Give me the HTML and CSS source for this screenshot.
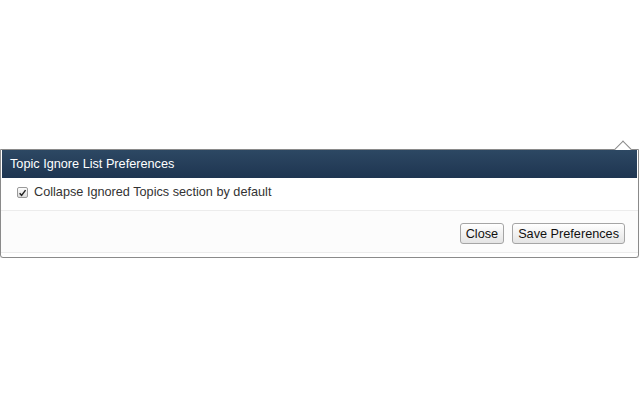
FILE: index.html
```html
<!DOCTYPE html>
<html>
<head>
<meta charset="utf-8">
<link rel="stylesheet" href="styles.css">
</head>
<body>
<div class="page">
  <div class="panel">
    <span class="arrow"></span>
    <div class="header">Topic Ignore List Preferences</div>
    <div class="row">
      <span class="checkbox"><svg width="10" height="10" viewBox="0 0 10 10"><path d="M1.8 5.2 L4 7.6 L8.4 1.8" fill="none" stroke="#222" stroke-width="1.6"/></svg></span>
      <span class="label">Collapse Ignored Topics section by default</span>
    </div>
    <div class="footer">
      <button class="btn">Close</button>
      <button class="btn">Save Preferences</button>
    </div>
  </div>
</div>
</body>
</html>
```
FILE: styles.css
```css
html, body { margin: 0; padding: 0; background: #fff; }
body { font-family: "Liberation Sans", Arial, sans-serif; font-size: 12.7px; color: #333; }
.page { padding-top: 149px; width: 639px; }
.panel {
  position: relative;
  border: 1px solid #8a8a8a;
  border-radius: 0 0 3px 3px;
  background: #fff;
  padding: 0 0 4px 0;
  box-shadow: 0 1px 1px rgba(0,0,0,0.1);
}
.arrow {
  position: absolute;
  top: -7px;
  left: 616px;
  width: 11px;
  height: 11px;
  background: #fff;
  border-left: 1px solid #8a8a8a;
  border-top: 1px solid #8a8a8a;
  transform: rotate(45deg);
}
.header {
  position: relative;
  margin: 0 1px;
  height: 28px;
  line-height: 28px;
  padding-left: 8px;
  color: #fff;
  background: linear-gradient(#2d4863, #1e3551);
}
.row {
  display: flex;
  align-items: center;
  height: 28px;
  padding: 0 0 4px 16px;
  border-bottom: 1px solid #ececec;
}
.checkbox {
  width: 9px; height: 9px;
  border: 1px solid #9a9a9a;
  border-radius: 2px;
  background: linear-gradient(#fdfdfd, #dcdcdc);
  display: flex; align-items: center; justify-content: center;
  margin-right: 6px;
  margin-top: 1px;
}
.checkbox svg { display: block; }
.label { color: #333; }
.footer {
  display: flex;
  justify-content: flex-end;
  align-items: center;
  gap: 8px;
  height: 41px;
  padding-right: 13px;
  background: #fcfcfc;
  border-bottom: 1px solid #ececec;
}
.btn {
  font-family: "Liberation Sans", Arial, sans-serif;
  font-size: 12.7px;
  color: #111;
  height: 21px;
  padding: 0 5px;
  border: 1px solid #a5a5a5;
  border-radius: 3px;
  background: linear-gradient(#ffffff, #e4e4e4);
  margin-top: 4px;
}
```
